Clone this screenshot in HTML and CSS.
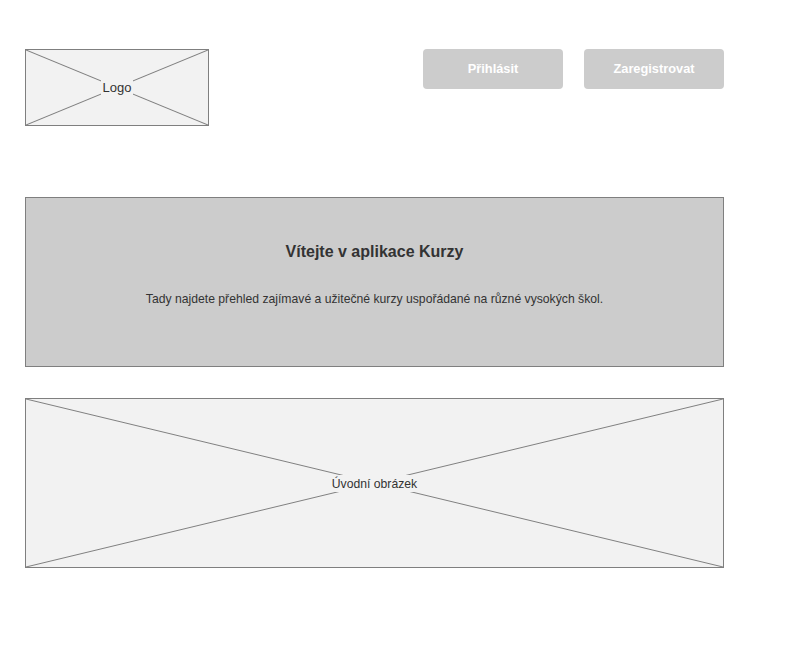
FILE: index.html
```html
<!DOCTYPE html>
<html lang="cs">
<head>
<meta charset="utf-8">
<title>Kurzy</title>
<link rel="stylesheet" href="styles.css">
</head>
<body>
<div class="page">
  <header class="header">
    <div class="placeholder logo">
      <svg class="cross" viewBox="0 0 100 100" preserveAspectRatio="none">
        <line x1="0" y1="0" x2="100" y2="100"/>
        <line x1="100" y1="0" x2="0" y2="100"/>
      </svg>
      <span class="ph-label">Logo</span>
    </div>
    <div class="actions">
      <button class="btn">Přihlásit</button>
      <button class="btn">Zaregistrovat</button>
    </div>
  </header>
  <section class="banner">
    <h1 class="banner-title">Vítejte v aplikace Kurzy</h1>
    <p class="banner-text">Tady najdete přehled zajímavé a užitečné kurzy uspořádané na různé vysokých škol.</p>
  </section>
  <div class="placeholder hero">
    <svg class="cross" viewBox="0 0 100 100" preserveAspectRatio="none">
      <line x1="0" y1="0" x2="100" y2="100"/>
      <line x1="100" y1="0" x2="0" y2="100"/>
    </svg>
    <span class="ph-label hero-label">Úvodní obrázek</span>
  </div>
</div>
</body>
</html>
```
FILE: styles.css
```css
* { box-sizing: border-box; }
html, body { margin: 0; padding: 0; background: #fff; }
body {
  font-family: "Liberation Sans", Arial, sans-serif;
  color: #333;
}
.page {
  width: 749px;
  padding: 49px 25px 0 25px;
}
.header {
  display: flex;
  justify-content: space-between;
  align-items: flex-start;
  height: 77px;
}
.placeholder {
  position: relative;
  display: flex;
  align-items: center;
  justify-content: center;
  background: #f2f2f2;
  border: 1px solid #7f7f7f;
}
.cross {
  position: absolute;
  inset: 0;
  width: 100%;
  height: 100%;
}
.cross line {
  stroke: #7f7f7f;
  stroke-width: 1;
  vector-effect: non-scaling-stroke;
}
.ph-label {
  position: relative;
  background: #f2f2f2;
  font-size: 13px;
  line-height: 15px;
  padding: 0 2px;
}
.hero-label {
  font-size: 12.2px;
  padding: 2px 2px 0 2px;
}
.logo {
  width: 184px;
  height: 77px;
}
.actions {
  display: flex;
  gap: 21px;
}
.btn {
  width: 140px;
  height: 40px;
  border: none;
  border-radius: 4px;
  background: #cccccc;
  color: #fff;
  font-family: "Liberation Sans", Arial, sans-serif;
  font-weight: bold;
  font-size: 12.8px;
  padding: 0 0 2px 0;
}
.banner {
  margin-top: 71px;
  height: 170px;
  background: #cccccc;
  border: 1px solid #7f7f7f;
  display: flex;
  flex-direction: column;
  align-items: center;
  padding-top: 44px;
}
.banner-title {
  margin: 0;
  font-size: 16px;
  line-height: 20px;
  font-weight: bold;
  color: #333;
}
.banner-text {
  margin: 0;
  margin-top: 30px;
  font-size: 12.2px;
  line-height: 14px;
  color: #333;
}
.hero {
  margin-top: 31px;
  height: 170px;
}
```
